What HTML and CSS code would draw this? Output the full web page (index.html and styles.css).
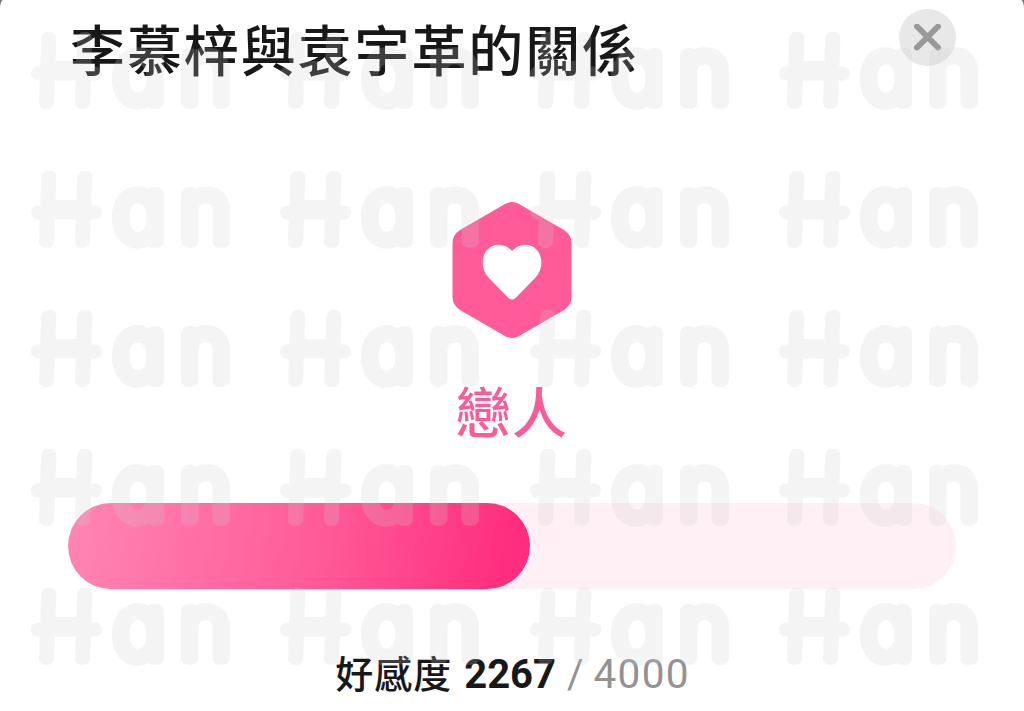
FILE: index.html
```html
<!DOCTYPE html>
<html lang="zh-Hant">
<head>
<meta charset="utf-8">
<title>李慕梓與袁宇革的關係</title>
<link rel="stylesheet" href="styles.css">
</head>
<body>
<main class="sheet">
  <header class="header">
    <h1 class="title">李慕梓與袁宇革的關係</h1>
    <button class="close" aria-label="關閉">
      <svg width="28" height="28" viewBox="0 0 28 28"><path d="M3 2.500 24 23.500M24 2.500 3 23.500" fill="none" stroke="#999" stroke-width="6" stroke-linecap="round"/></svg>
    </button>
  </header>
  <section class="relation">
    <svg class="badge" width="120" height="136" viewBox="0 0 120 136">
      <path d="M53 2Q60-2 67 2L112 28Q119.500 33 119.500 41V95Q119.500 103 112 108L67 134Q60 138 53 134L8 108Q.5 103 .5 95V41Q.5 33 8 28Z" fill="#ff5b98"/>
      <path d="M60 49C67 41 79 41 85 48C91 55 91 67 84 75L64 95.500Q60 99.500 56 95.500L36 75C29 67 29 55 35 48C41 41 53 41 60 49Z" fill="#fff"/>
    </svg>
    <h2 class="status">戀人</h2>
  </section>
  <div class="track"><div class="fill" style="width:52%"></div></div>
  <p class="score"><span class="label">好感度</span><strong class="value">2267</strong><span class="slash">/</span><span class="max">4000</span></p>
  <div class="marks" id="marks" aria-hidden="true"></div>
</main>
<script src="marks.js"></script>
</body>
</html>
```
FILE: marks.js
```js
// Fills the overlay with a 4 x 5 grid of watermark words.
const mark = `<svg class="mark" width="249" height="139" viewBox="0 0 249 139">
  <line x1="7" y1="73.500" x2="64" y2="73.500" class="bar"/>
  <text class="cap" transform="translate(6 102) skewX(-2) scale(.86 1)">H</text>
  <text y="102" x="82.500 149">an</text>
</svg>`;
document.getElementById("marks").innerHTML = mark.repeat(20);
```
FILE: styles.css
```css
* { box-sizing: border-box; }
body { margin: 0; background: #777; font-family: Roboto, "Noto Sans CJK TC", sans-serif; }
h1, h2, p { margin: 0; }
.sheet {
  position: relative;
  display: flex;
  flex-direction: column;
  height: 711px;
  padding: 9px 68px 0;
  overflow: hidden;
  background: #fff;
  border-radius: 3px 3px 0 0 / 9px 9px 0 0;
}
.header { display: flex; justify-content: space-between; align-items: flex-start; height: 193px; }
.title { margin-left: 2px; font: 500 55px/76px "Noto Sans CJK TC", sans-serif; letter-spacing: 1.900px; color: #181818; white-space: nowrap; }
.close {
  display: flex;
  align-items: center;
  justify-content: center;
  width: 57px;
  height: 57px;
  padding: 0;
  border: 0;
  border-radius: 50%;
  background: #e8e8e8;
}
.relation { display: flex; flex-direction: column; align-items: center; height: 301px; }
.badge { display: block; }
.status { margin-top: 32px; font: 500 55px/78px "Noto Sans CJK TC", sans-serif; letter-spacing: 1.500px; color: #fa5b99; }
.track { height: 86px; flex: none; border-radius: 43px; background: #fff0f5; }
.fill { height: 100%; border-radius: 43px; background: linear-gradient(100deg, #ff86b4 0%, #ff5a98 55%, #ff2d7d 95%); }
.score { display: flex; justify-content: center; align-items: baseline; margin-top: 53px; padding-left: 1px; font-size: 40px; line-height: 60px; white-space: nowrap; color: #181818; }
.label { font: 500 38px/60px "Noto Sans CJK TC", sans-serif; letter-spacing: 1px; margin-right: 12px; }
.value { font-weight: 700; }
.slash, .max { color: #929292; }
.slash { margin: 0 10px 0 11px; }
.max { font-size: 40.500px; letter-spacing: 1.300px; }
/* Repeating translucent watermark laid over the whole sheet */
.marks {
  position: absolute;
  left: 31px;
  top: 0;
  display: grid;
  grid-template-columns: repeat(4, 249.300px);
  grid-auto-rows: 139px;
  opacity: .21;
  pointer-events: none;
}
.mark { display: block; overflow: visible; }
.mark text {
  font: 200 87px Inter, sans-serif;
  font-feature-settings: "cv11";
  fill: #cdcdcd;
  stroke: #cdcdcd;
  stroke-width: 13.500px;
  stroke-linejoin: round;
}
.mark .bar { stroke: #cdcdcd; stroke-width: 14px; stroke-linecap: round; }
```
